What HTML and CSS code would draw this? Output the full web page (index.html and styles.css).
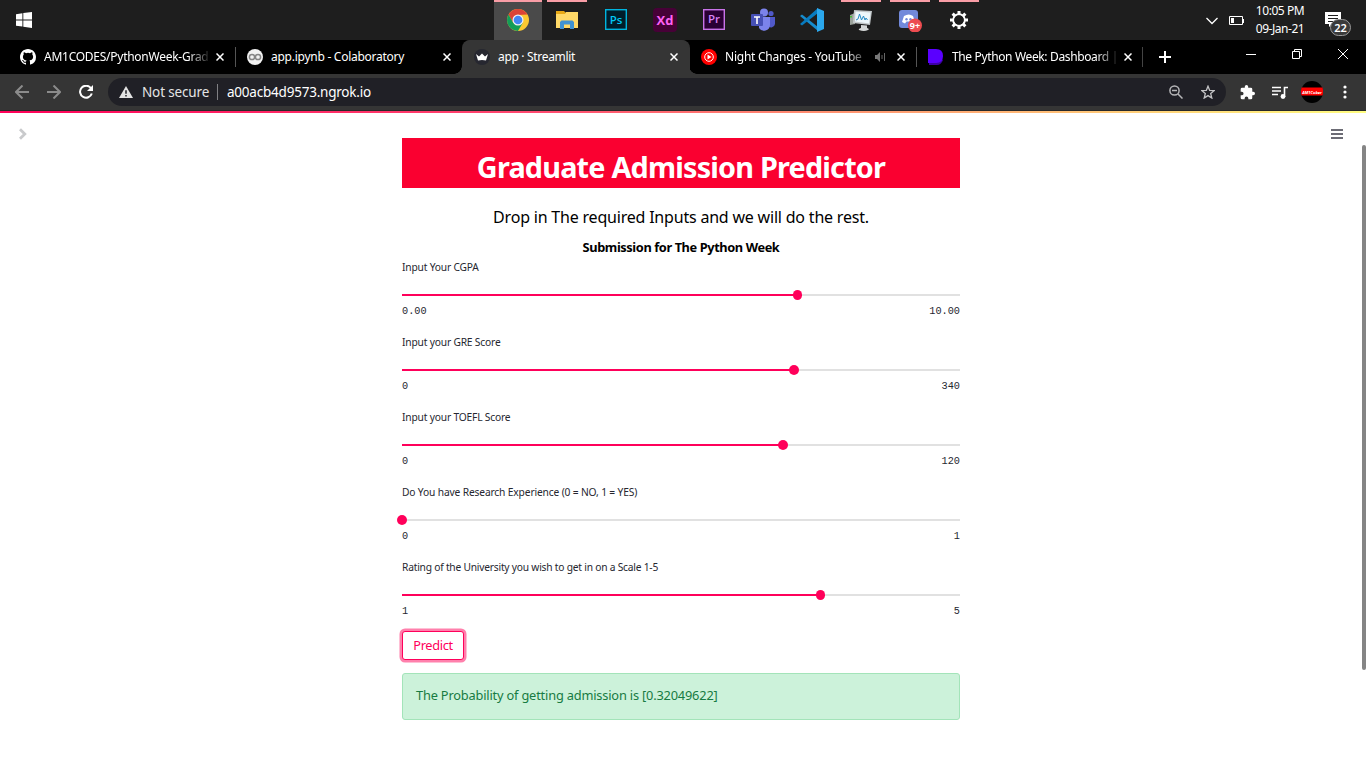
FILE: index.html
```html
<!DOCTYPE html>
<html lang="en">
<head>
<meta charset="utf-8">
<title>app · Streamlit</title>
<link rel="stylesheet" href="styles.css">
</head>
<body>
<div class="screen">
  <header class="taskbar">
    <svg class="start" viewBox="0 0 16 16"><path d="M0 2.200 6.400 1.300V7.500H0zM7.300 1.100 16 0V7.500H7.300zM0 8.400H6.400V14.600L0 13.700zM7.300 8.400H16V16L7.300 14.800z"/></svg>
    <nav class="apps">
      <div class="app active open"><svg viewBox="0 0 24 24"><circle cx="12" cy="12" r="11" fill="#fbc931"/><path d="M2.500 6.500A11 11 0 0 1 21.500 6.500L12 7 7.200 14.800z" fill="#db4437"/><path d="M2.500 6.500 7.200 14.800 12 17l4.800-2.200L12 23A11 11 0 0 1 2.500 6.500" fill="#129d58"/><circle cx="12" cy="12" r="5.500" fill="#f1f1f1"/><circle cx="12" cy="12" r="4.300" fill="#4286f4"/></svg></div>
      <div class="app open"><svg viewBox="0 0 24 24"><path d="M1 3h8l2 2h12v15H1z" fill="#e8a916"/><path d="M1 6h9l1-2h12v16H1z" fill="#ffd968"/><path d="M5 21v-7l1.500-1.500h11L19 14v7h-4v-4.500H9V21z" fill="#3f92d2"/></svg></div>
      <div class="app"><svg viewBox="0 0 24 24"><rect x="1.700" y="1.700" width="20.600" height="19.600" fill="#001d2b" stroke="#00b4df" stroke-width="1.400"/><text x="12" y="15.500" class="badge-ps">Ps</text></svg></div>
      <div class="app"><svg viewBox="0 0 24 24"><rect x="0" y="0" width="24" height="24" rx="4" fill="#470137"/><text x="12" y="16.500" class="badge-xd">Xd</text></svg></div>
      <div class="app"><svg viewBox="0 0 24 24"><rect x="1.700" y="1.700" width="20.600" height="19.600" fill="#2a0034" stroke="#c873e8" stroke-width="1.400"/><text x="12" y="15" class="badge-pr">Pr</text></svg></div>
      <div class="app"><svg viewBox="0 0 24 24"><circle cx="20" cy="5.500" r="2.600" fill="#5059c9"/><path d="M17 9h7v7a4 4 0 0 1-7 2z" fill="#5059c9"/><circle cx="13" cy="4.500" r="4" fill="#7b83eb"/><path d="M8 9h11v8a6 6 0 0 1-11 3z" fill="#7b83eb"/><rect y="6" width="12" height="12" rx="1" fill="#4650b5"/><path d="M3 9h6M6 9v7" stroke="#fff" stroke-width="1.600"/></svg></div>
      <div class="app"><svg viewBox="0 0 24 24"><path d="M0 8 2 6.500 18 19v4z" fill="#168cce"/><path d="M0 16 2 17.500 18 5V0z" fill="#087bbf"/><path d="M17 0 24 3v18l-7 3V0z" fill="#2ba8ed"/></svg></div>
      <div class="app open"><svg viewBox="0 0 24 24"><path d="M1 7 6 5v11l-5 1z" fill="#9ba29b"/><path d="M1 8h2v1.500H1z" fill="#43bd35"/><path d="m5 2 18 1-2 14-17-2z" fill="#c3c8ca"/><path d="m6.500 3.500 15 1-1.500 11-14-2z" fill="#edf7fb"/><path d="m7 12 2-1 1.500-5 2 6 2-4 1.500 4 1-2 1.500 2" fill="none" stroke="#268ac4"/><path d="m12 17 6 .5v2.500q3 1 1 2-4 2-9 0-1-1 2-2z" fill="#d4d7d7"/></svg></div>
      <div class="app open"><svg viewBox="0 0 24 24"><rect x="1" y="2" width="19" height="18" rx="3" fill="#7289da"/><path d="M6 8q5-3 9 0l2 6-3 1.500-1.500-2h-4l-1.500 2L4 14z" fill="#fff"/><circle cx="8.500" cy="11.300" r="1.200" fill="#7289da"/><circle cx="12.500" cy="11.300" r="1.200" fill="#7289da"/><circle cx="17" cy="17.500" r="7" fill="#ed4c50"/><text x="17" y="21" class="badge-nine">9+</text></svg></div>
      <div class="app open"><svg viewBox="0 0 24 24"><circle cx="12" cy="12" r="5.800" fill="none" stroke="#fff" stroke-width="2"/><path d="M12 3v4M12 17v4M3 12h4M17 12h4M5.600 5.600l2.800 2.800M15.600 15.600l2.800 2.800M5.600 18.400l2.800-2.800M15.600 8.400l2.800-2.800" stroke="#fff" stroke-width="3"/><circle cx="12" cy="12" r="4.600" fill="#1e1e1e"/></svg></div>
    </nav>
    <div class="tray">
      <svg class="chev" viewBox="0 0 12 8"><path d="m.5 1 5.500 5.500L11.500 1"/></svg>
      <svg class="battery" viewBox="0 0 15 10"><path d="M.5.500h13v8H.5z" fill="none" stroke="#fff"/><path d="M2 2h3v5H2zM14 3h1v4h-1z" fill="#fff"/></svg>
      <div class="clock"><span>10:05 PM</span><span>09-Jan-21</span></div>
      <div class="notify"><svg viewBox="0 0 16 16"><path d="M0 0h16v12H7l-3 3v-3H0z" fill="#fff"/><path d="M3 3.500h10M3 6.500h10M3 9.500h6" stroke="#1e1e1e"/></svg><span class="count">22</span></div>
    </div>
  </header>

  <div class="tabs">
    <div class="tab"><svg class="fav" viewBox="0 0 16 16"><path fill="#fff" d="M8 0C3.580 0 0 3.580 0 8c0 3.540 2.290 6.530 5.470 7.590.4.070.55-.17.55-.38 0-.19-.01-.82-.01-1.490-2.010.37-2.530-.49-2.690-.94-.09-.23-.48-.94-.82-1.130-.28-.15-.68-.52-.01-.53.63-.01 1.080.58 1.230.82.72 1.210 1.870.87 2.330.66.07-.52.28-.87.51-1.070-1.780-.2-3.640-.89-3.640-3.950 0-.87.31-1.590.82-2.150-.08-.2-.36-1.020.08-2.120 0 0 .67-.21 2.200.82a7.600 7.600 0 0 1 4 0c1.530-1.040 2.200-.82 2.200-.82.44 1.100.16 1.920.08 2.120.51.56.82 1.270.82 2.150 0 3.070-1.870 3.750-3.650 3.950.29.25.54.73.54 1.480 0 1.070-.01 1.930-.01 2.200 0 .21.15.46.55.38A8 8 0 0 0 16 8c0-4.420-3.580-8-8-8z"/></svg><span class="tab-title t1 fade">AM1CODES/PythonWeek-Grad</span><svg class="x" viewBox="0 0 8 8"><path d="m.5.500 7 7m0-7-7 7"/></svg></div>
    <div class="tab sep"><svg class="fav" viewBox="0 0 16 16"><circle cx="8" cy="8" r="8" fill="#f1f1f1"/><circle cx="5" cy="8" r="2.600" fill="none" stroke="#858585" stroke-width="1.500"/><circle cx="11" cy="8" r="2.600" fill="none" stroke="#858585" stroke-width="1.500"/></svg><span class="tab-title t2">app.ipynb - Colaboratory</span><svg class="x" viewBox="0 0 8 8"><path d="m.5.500 7 7m0-7-7 7"/></svg></div>
    <div class="tab current"><svg class="fav" viewBox="0 0 16 16"><circle cx="8" cy="8" r="8" fill="#262730"/><path d="m2 5 3 2.500L8 4.500l3 3L14 5l-2 6.500q-4-1-8 0z" fill="#fff"/></svg><span class="tab-title t3">app · Streamlit</span><svg class="x" viewBox="0 0 8 8"><path d="m.5.500 7 7m0-7-7 7"/></svg></div>
    <div class="tab"><svg class="fav" viewBox="0 0 16 16"><circle cx="8" cy="8" r="8" fill="#f00"/><circle cx="8" cy="8" r="4.300" fill="none" stroke="#fff"/><path d="m6.500 5.500 4 2.500-4 2.500z" fill="#fff"/></svg><span class="tab-title t4 fade">Night Changes - YouTube |</span><svg class="sound" viewBox="0 0 11 10"><path d="M0 3h2l3-3v10L2 7H0z" fill="#777"/><path d="M7 3v4M9.500 1v8" stroke="#666"/></svg><svg class="x" viewBox="0 0 8 8"><path d="m.5.500 7 7m0-7-7 7"/></svg></div>
    <div class="tab sep"><svg class="fav" viewBox="0 0 16 16"><path d="M1 2v14h8q4 0 6-5" fill="#3d00a5"/><path d="M0 0h8q7 0 7 7t-7 7H0z" fill="#5a00ff"/></svg><span class="tab-title t5 fade">The Python Week: Dashboard |</span><svg class="x" viewBox="0 0 8 8"><path d="m.5.500 7 7m0-7-7 7"/></svg></div>
    <div class="newtab"><svg viewBox="0 0 12 12"><path d="M6 0v12M0 6h12" stroke="#fff" stroke-width="2"/></svg></div>
    <div class="winctl">
      <svg viewBox="0 0 10 10"><path d="M0 5.500h10"/></svg>
      <svg viewBox="0 0 10 10"><path d="M.5 2.500h7v7h-7zM2.500 2.500v-2h7v7h-2"/></svg>
      <svg viewBox="0 0 10 10"><path d="m0 0 10 10M10 0 0 10"/></svg>
    </div>
  </div>

  <div class="toolbar">
    <svg class="nav" viewBox="0 0 14 14"><path d="M14 7H1M7.500.500 1 7l6.500 6.500" stroke="#8b8b8b"/></svg>
    <svg class="nav" viewBox="0 0 14 14"><path d="M0 7h13M6.500.500 13 7l-6.500 6.500" stroke="#8b8b8b"/></svg>
    <svg class="nav" viewBox="0 0 14 14"><path d="M11.800 3A6 6 0 1 0 12.800 8.500" stroke="#fff"/><path d="M14 0v6H8z" fill="#fff" stroke="none"/></svg>
    <div class="omnibox">
      <svg class="warn" viewBox="0 0 14 12"><path d="M7 0 14 12H0z" fill="#e3e3e3"/><path d="M7 4.300v3.400M7 9v1.600" stroke="#202026" stroke-width="1.500"/></svg>
      <span class="unsafe">Not secure</span>
      <span class="url">a00acb4d9573.ngrok.io</span>
      <svg class="zoom" viewBox="0 0 14 14"><g fill="none" stroke="#b6b6b8" stroke-width="1.500"><circle cx="5.500" cy="5.500" r="4.600"/><path d="m9 9 4.500 4.500M3 5.500h5"/></g></svg>
      <svg class="star" viewBox="0 0 14 14"><path d="m7 1.200 1.700 4.200 4.400.3-3.400 2.900 1.100 4.400L7 10.600 3.200 13l1.100-4.400L.9 5.700l4.400-.3z" fill="none" stroke="#c4c4c6" stroke-width="1.300"/></svg>
    </div>
    <svg class="puzzle" viewBox="1 1 22 22"><path fill="#fff" d="M20.500 11H19V7a2 2 0 0 0-2-2h-4V3.500a2.500 2.500 0 0 0-5 0V5H4a2 2 0 0 0-2 2v3.800h1.500a2.700 2.700 0 0 1 0 5.400H2V20a2 2 0 0 0 2 2h3.800v-1.500a2.700 2.700 0 0 1 5.400 0V22H17a2 2 0 0 0 2-2v-4h1.500a2.500 2.500 0 0 0 0-5z"/></svg>
    <svg class="queue" viewBox="0 0 16 13"><path d="M0 1.500h9M0 5h9M0 8.500h6M12.500 11V1.500H16" fill="none" stroke="#fff" stroke-width="1.600"/><circle cx="11" cy="10.500" r="2.400" fill="#fff"/></svg>
    <svg class="avatar" viewBox="0 0 22 22"><circle cx="11" cy="11" r="11" fill="#000"/><path d="M.5 6.500h21q1 4 0 8H.5q-1-4 0-8z" fill="#f00"/><text x="11" y="12.500" class="badge-name">AM1Cuber</text></svg>
    <svg class="dots" viewBox="0 0 4 14"><circle cx="2" cy="2" r="1.600"/><circle cx="2" cy="7" r="1.600"/><circle cx="2" cy="12" r="1.600"/></svg>
  </div>

  <main class="page">
    <div class="rainbow"></div>
    <svg class="expand" viewBox="0 0 8 12"><path d="m1 1.200 4.800 4.800L1 10.800" fill="none" stroke="#c9cacc" stroke-width="2.800"/></svg>
    <svg class="menu" viewBox="0 0 12 10"><path d="M0 1h12M0 5h12M0 9h12" stroke="#3c3d48" stroke-width="1.600"/></svg>
    <div class="scrollbar"></div>
    <section class="content">
      <h1 class="title"><span>Graduate Admission Predictor</span></h1>
      <p class="lead">Drop in The required Inputs and we will do the rest.</p>
      <p class="sub">Submission for The Python Week</p>
      <div class="slider"><label class="l1">Input Your CGPA</label><div class="track"><div class="fill" style="width:70.9%"></div></div><div class="range"><span>0.00</span><span>10.00</span></div></div>
      <div class="slider"><label class="l2">Input your GRE Score</label><div class="track"><div class="fill" style="width:70.3%"></div></div><div class="range"><span>0</span><span>340</span></div></div>
      <div class="slider"><label class="l3">Input your TOEFL Score</label><div class="track"><div class="fill" style="width:68.3%"></div></div><div class="range"><span>0</span><span>120</span></div></div>
      <div class="slider"><label class="l4">Do You have Research Experience (0 = NO, 1 = YES)</label><div class="track"><div class="fill" style="width:0%"></div></div><div class="range"><span>0</span><span>1</span></div></div>
      <div class="slider"><label class="l5">Rating of the University you wish to get in on a Scale 1-5</label><div class="track"><div class="fill" style="width:75%"></div></div><div class="range"><span>1</span><span>5</span></div></div>
      <button class="predict">Predict</button>
      <div class="alert"><span>The Probability of getting admission is [0.32049622]</span></div>
    </section>
  </main>
</div>
</body>
</html>
```
FILE: styles.css
```css
* { box-sizing: border-box; }
body { margin: 0; font-family: "Noto Sans", sans-serif; }
svg { display: block; flex: none; }
.screen { width: 1366px; height: 768px; overflow: hidden; display: flex; flex-direction: column; background: #fff; }

.taskbar { height: 40px; flex: none; background: #1e1e1e; display: flex; color: #fff; }
.start { width: 16px; height: 16px; margin: 12px 0 0 16px; fill: #fff; }
.apps { display: flex; gap: 1px; margin-left: 462px; }
.app { width: 48px; height: 40px; display: flex; justify-content: center; padding-top: 8px; }
.app svg { width: 24px; height: 24px; }
.app.open { background: linear-gradient(#f99da6, #f99da6) center top / 40px 2px no-repeat; }
.app.active { background: linear-gradient(#f99da6, #f99da6) top / 48px 2px no-repeat #4a4a4a; }
.app text, .badge-name { text-anchor: middle; font-family: "Open Sans", sans-serif; }
.badge-ps { font-size: 11.5px; font-weight: 600; fill: #00c8f5; }
.badge-xd { font-size: 13px; font-weight: 700; fill: #ff61f6; }
.badge-pr { font-size: 11.5px; font-weight: 600; fill: #d884f5; }
.badge-nine { font-size: 9px; font-weight: 700; fill: #fff; }
.badge-name { font-size: 4px; font-weight: 700; font-style: italic; fill: #fff; }
.tray { margin-left: auto; display: flex; width: 160px; }
.chev { width: 12px; height: 8px; margin-top: 17px; fill: none; stroke: #fff; stroke-width: 1.3; }
.battery { width: 15px; height: 10px; margin: 16px 0 0 11px; }
.clock { width: 60px; margin-left: 6px; display: flex; flex-direction: column; align-items: center; font-size: 12px; line-height: 18px; padding-top: 2px; letter-spacing: -.45px; }
.notify { margin: 12px 0 0 15px; position: relative; }
.notify svg { width: 16px; height: 16px; }
.count { position: absolute; left: 5px; top: 7px; width: 21px; height: 17px; border: 1px solid #999; border-radius: 9px; background: #3a3a3a; font-size: 11px; line-height: 15px; text-align: center; font-weight: 600; }

.tabs { height: 34px; flex: none; background: #000; display: flex; padding-left: 8px; }
.tab { width: 227px; height: 34px; display: flex; align-items: center; padding-left: 12px; color: #fff; font-size: 12px; position: relative; }
.tab.sep { background: linear-gradient(#555, #555) left center / 1px 20px no-repeat; }
.tab.current { background: #353535; border-radius: 8px 8px 0 0; box-shadow: 1px 0 #353535; z-index: 1; }
.tab.current::before, .tab.current::after { content: ""; position: absolute; bottom: 0; width: 8px; height: 8px; }
.tab.current::before { left: -8px; background: radial-gradient(circle at 0 0, transparent 7.5px, #353535 8px); }
.tab.current::after { right: -8px; background: radial-gradient(circle at 100% 0, transparent 7.5px, #353535 8px); }
.fav { width: 16px; height: 16px; }
.tab-title { margin-left: 8px; width: 164px; white-space: nowrap; line-height: 18px; letter-spacing: -.26px; }
.tab-title.fade { mask-image: linear-gradient(90deg, #000 calc(100% - 20px), rgba(0, 0, 0, .15)); }
.tab-title.t4 { width: 141px; letter-spacing: -.24px; }
.tab-title.t3 { letter-spacing: -.32px; }
.tab-title.t5 { letter-spacing: -.36px; }
.x { width: 8px; height: 8px; margin-left: 8px; fill: none; stroke: #fff; stroke-width: 1.5; }
.sound { width: 11px; height: 10px; margin-left: 9px; }
.sound + .x { margin-left: 11px; }
.newtab { width: 30px; border-left: 1px solid #444; margin: 7px 0 7px -1px; height: 20px; padding: 4px 0 0 16px; }
.newtab svg { width: 12px; height: 12px; }
.winctl { margin-left: auto; display: flex; gap: 36px; padding: 9px 18px 0 0; }
.winctl svg { width: 10px; height: 10px; fill: none; stroke: #fff; }

.toolbar { height: 37px; flex: none; background: #353535; border-bottom: 1px solid #292929; display: flex; align-items: center; padding-left: 15px; color: #e4e4e5; font-size: 13.5px; }
.nav { width: 14px; height: 14px; margin-right: 18px; fill: none; stroke-width: 2; }
.omnibox { width: 1118px; height: 28px; border-radius: 14px; background: #202026; display: flex; align-items: center; padding-left: 11px; margin-left: -3px; }
.warn { width: 14px; height: 12px; }
.unsafe { width: 76px; margin-left: 9px; border-right: 1px solid #808084; line-height: 16px; white-space: nowrap; letter-spacing: -.15px; }
.url { margin-left: 9px; color: #fff; white-space: nowrap; line-height: 18px; padding-bottom: 1px; letter-spacing: -.22px; }
.zoom { width: 14px; height: 14px; margin-left: auto; }
.star { width: 14px; height: 14px; margin: 0 11px 0 18px; }
.puzzle { width: 15px; height: 15px; margin-left: 14px; }
.queue { width: 16px; height: 13px; margin-left: 17px; }
.avatar { width: 22px; height: 22px; margin-left: 13px; }
.dots { width: 4px; height: 14px; margin-left: 20px; fill: #fff; }

.page { flex: 1; position: relative; display: flex; flex-direction: column; align-items: center; }
.rainbow { width: 100%; height: 2px; background: linear-gradient(90deg, #ff0059, #ff4b70 40%, #ff8f70 60%, #fffd80); }
.expand { position: absolute; left: 19px; top: 17px; width: 8px; height: 12px; }
.menu { position: absolute; left: 1331px; top: 18px; width: 12px; height: 10px; }
.scrollbar { position: absolute; right: 0; top: 34px; width: 4px; height: 525px; border-radius: 2px; background: #858585; }
.content { width: 558px; margin: 25px 0 0 -4px; color: #000; }
.title { height: 50px; margin: 0; background: #fa0030; color: #fff; text-align: center; font-size: 28.8px; line-height: 38px; padding-top: 10px; letter-spacing: -.8px; white-space: nowrap; }
.lead { margin: 17px 0 0; font-size: 16px; line-height: 24px; text-align: center; white-space: nowrap; letter-spacing: -.2px; }
.sub { margin: 8px 0 0; font-size: 12.8px; line-height: 20px; text-align: center; font-weight: 700; letter-spacing: -.4px; }
.slider { height: 75px; padding-top: 3px; color: #262730; }
.slider label { display: block; font-size: 10.24px; line-height: 15px; width: max-content; letter-spacing: -.18px; }
.slider .l4 { letter-spacing: -.15px; }
.slider .l5 { letter-spacing: -.22px; }
.track { height: 2px; margin-top: 19px; background: #e1e1e1; }
.fill { height: 2px; background: #ff005a; position: relative; }
.fill::after { content: ""; position: absolute; right: -4.5px; top: -4px; width: 9.5px; height: 10px; border-radius: 5px; background: #ff005a; }
.range { display: flex; justify-content: space-between; margin-top: 8px; font: 10.24px/15px "Liberation Mono", monospace; }
.predict { display: block; width: 62px; height: 29px; margin: -1px 0 0; padding: 0 0 2px; border: 1px solid #ff005a; border-radius: 3px; background: #fff; color: #ff005a; box-shadow: 0 0 0 2.5px #ff80ac; font: 12.8px/20px "Noto Sans", sans-serif; letter-spacing: -.35px; }
.alert { height: 47px; margin-top: 13px; border: 1px solid #a3e4b9; border-radius: 3px; background: #ccf2da; color: #177b42; padding: 10px 13px; font-size: 12.8px; line-height: 22px; letter-spacing: -.18px; }
```
